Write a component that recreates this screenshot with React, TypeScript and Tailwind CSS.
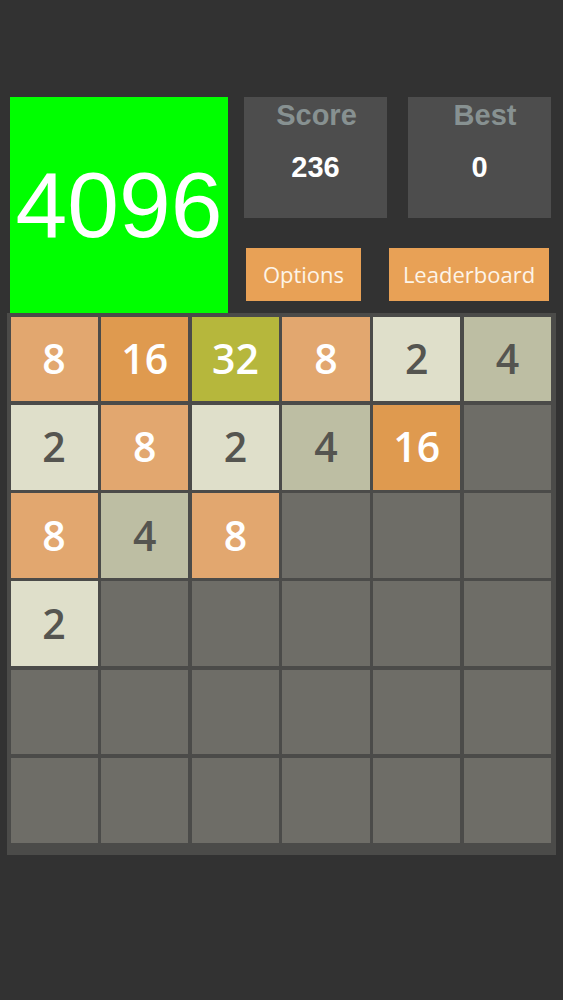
import React from 'react'

// 0 = empty cell
const board: number[][] = [
  [8, 16, 32, 8, 2, 4],
  [2, 8, 2, 4, 16, 0],
  [8, 4, 8, 0, 0, 0],
  [2, 0, 0, 0, 0, 0],
  [0, 0, 0, 0, 0, 0],
  [0, 0, 0, 0, 0, 0],
]

const tileStyle = (value: number) => {
  switch (value) {
    case 2:
      return 'bg-[#dfdfca] text-[#555550]'
    case 4:
      return 'bg-[#bdbea3] text-[#555550]'
    case 8:
      return 'bg-[#e2a76f] text-white'
    case 16:
      return 'bg-[#df9a4f] text-white'
    case 32:
      return 'bg-[#b6b73c] text-white'
    default:
      return 'bg-[#6e6d67]'
  }
}

const StatBox = ({ label, value, labelClass = '' }: { label: string; value: string; labelClass?: string }) => (
  <div className="flex h-[121px] w-[143px] flex-col items-center bg-[#4d4d4d] font-['Liberation_Sans',Arial,sans-serif] font-bold">
    <span className={`mt-[4px] text-[29px] leading-[29px] text-[#879191] ${labelClass}`}>{label}</span>
    <span className="mt-[23px] text-[29px] leading-[29px] text-white">{value}</span>
  </div>
)

export default function App() {
  return (
    <div className="min-h-[1000px] w-full bg-[#323232] pt-[97px]">
      {/* Header */}
      <div className="flex">
        <div className="ml-[10px] flex h-[216px] w-[218px] items-center justify-center bg-[#00ff00]">
          <span className="font-['Liberation_Sans',Arial,sans-serif] text-[93px] leading-none text-white">
            4096
          </span>
        </div>
        <div className="ml-[16px] flex flex-col">
          <div className="flex gap-[21px]">
            <StatBox label="Score" value="236" labelClass="ml-[2px]" />
            <StatBox label="Best" value="0" labelClass="ml-[11px]" />
          </div>
          <div className="mt-[30px] flex font-['Open_Sans',sans-serif] text-[22px] text-[#fdf4e8]">
            <button className="ml-[2px] h-[53px] w-[115px] bg-[#e8a156]">Options</button>
            <button className="ml-[28px] h-[53px] w-[160px] bg-[#e8a156]">Leaderboard</button>
          </div>
        </div>
      </div>

      {/* Board */}
      <div className="ml-[7px] w-[549px] bg-[#4b4b49] pb-[12px] pl-[3.5px] pr-[5px] pt-[3.5px]">
        <div className="grid grid-cols-6 gap-[3.5px]">
          {board.flat().map((value, i) => (
            <div
              key={i}
              className={`flex h-[84.8px] items-center justify-center font-['Open_Sans',sans-serif] text-[41px] font-semibold ${tileStyle(value)}`}
            >
              {value > 0 ? value : ''}
            </div>
          ))}
        </div>
      </div>
    </div>
  )
}
